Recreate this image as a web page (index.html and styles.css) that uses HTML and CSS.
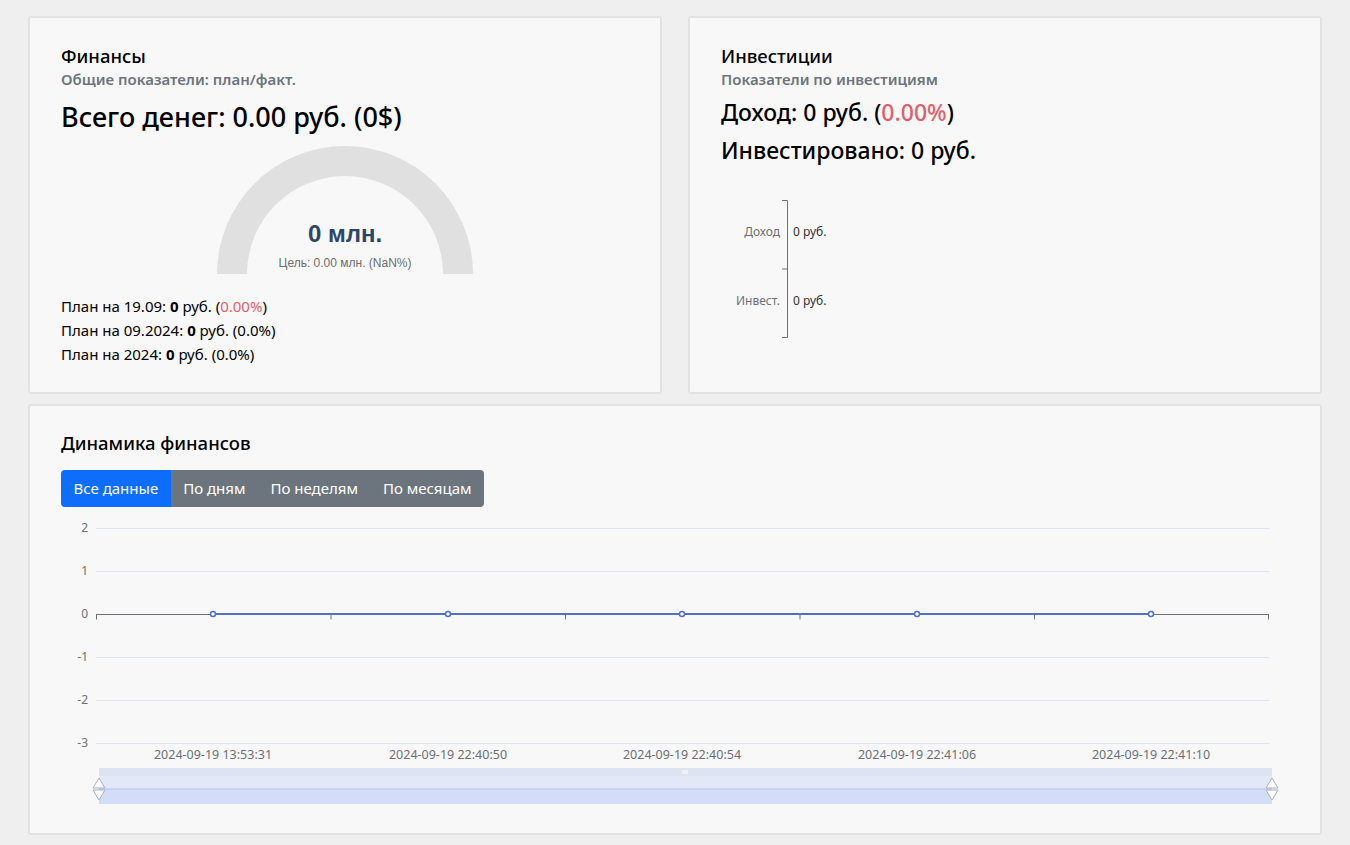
FILE: index.html
```html
<!DOCTYPE html>
<html lang="ru">
<head>
    <meta charset="UTF-8">
    <title>Финансы</title>
    <link rel="stylesheet" href="styles.css">
</head>
<body>
<div class="page">
    <div class="row">
        <div class="card">
            <h5 class="card-title">Финансы</h5>
            <h6 class="card-subtitle">Общие показатели: план/факт.</h6>
            <h4 class="total">Всего денег: 0.00 руб. (0$)</h4>
            <div class="gauge">
                <svg width="256" height="128" viewBox="0 0 256 128">
                    <path d="M0 128 A128 128 0 0 1 256 128 L226 128 A98 98 0 0 0 30 128 Z" fill="#e0e0e0"/>
                    <text x="128" y="96" text-anchor="middle" class="gauge-value">0 млн.</text>
                    <text x="128" y="121" text-anchor="middle" class="gauge-goal">Цель: 0.00 млн. (NaN%)</text>
                </svg>
            </div>
            <ul class="plan">
                <li>План на 19.09: <b>0</b> руб. (<span class="red">0.00%</span>)</li>
                <li>План на 09.2024: <b>0</b> руб. (0.0%)</li>
                <li>План на 2024: <b>0</b> руб. (0.0%)</li>
            </ul>
        </div>

        <div class="card">
            <h5 class="card-title">Инвестиции</h5>
            <h6 class="card-subtitle">Показатели по инвестициям</h6>
            <h4 class="invest">Доход: 0 руб. (<span class="red">0.00%</span>)</h4>
            <h4 class="invest">Инвестировано: 0 руб.</h4>
            <div class="bars">
                <svg width="200" height="150" viewBox="0 0 200 150">
                    <path d="M61 1.5 H66.5 V138.5 H61 M61 70 H66.5" fill="none" stroke="#6e7079" stroke-width="1"/>
                    <text x="59" y="37" text-anchor="end" class="axis-label">Доход</text>
                    <text x="72" y="37" class="bar-value">0 руб.</text>
                    <text x="59" y="106" text-anchor="end" class="axis-label">Инвест.</text>
                    <text x="72" y="106" class="bar-value">0 руб.</text>
                </svg>
            </div>
        </div>
    </div>

    <div class="card wide">
        <h5 class="card-title">Динамика финансов</h5>
        <div class="btn-group">
            <span class="btn active">Все данные</span>
            <span class="btn">По дням</span>
            <span class="btn">По неделям</span>
            <span class="btn">По месяцам</span>
        </div>
        <div class="chart">
            <svg width="1228" height="300" viewBox="0 0 1228 300">
                <g stroke="#e0e6f1" stroke-width="1">
                    <line x1="35" y1="13.5" x2="1208" y2="13.5"/>
                    <line x1="35" y1="56.5" x2="1208" y2="56.5"/>
                    <line x1="35" y1="142.5" x2="1208" y2="142.5"/>
                    <line x1="35" y1="185.5" x2="1208" y2="185.5"/>
                    <line x1="35" y1="228.5" x2="1208" y2="228.5"/>
                </g>
                <g class="axis-label" text-anchor="end">
                    <text x="27" y="17">2</text>
                    <text x="27" y="60">1</text>
                    <text x="27" y="103">0</text>
                    <text x="27" y="146">-1</text>
                    <text x="27" y="189">-2</text>
                    <text x="27" y="232">-3</text>
                </g>
                <g stroke="#6e7079" stroke-width="1" fill="none">
                    <line x1="35" y1="99.5" x2="1208" y2="99.5"/>
                    <path d="M35.5 99.5 V104.5 M270 99.5 V104.5 M504.5 99.5 V104.5 M739 99.5 V104.5 M973.5 99.5 V104.5 M1207.5 99.5 V104.5"/>
                </g>
                <line x1="152" y1="99" x2="1090" y2="99" stroke="#5470c6" stroke-width="2"/>
                <g fill="#fff" stroke="#5470c6" stroke-width="1.5">
                    <circle cx="152" cy="99" r="2.5"/>
                    <circle cx="387" cy="99" r="2.5"/>
                    <circle cx="621" cy="99" r="2.5"/>
                    <circle cx="856" cy="99" r="2.5"/>
                    <circle cx="1090" cy="99" r="2.5"/>
                </g>
                <g class="axis-label date" text-anchor="middle">
                    <text x="152" y="244">2024-09-19 13:53:31</text>
                    <text x="387" y="244">2024-09-19 22:40:50</text>
                    <text x="621" y="244">2024-09-19 22:40:54</text>
                    <text x="856" y="244">2024-09-19 22:41:06</text>
                    <text x="1090" y="244">2024-09-19 22:41:10</text>
                </g>
                <rect x="38" y="253" width="1173" height="8" fill="#dde3f1"/>
                <rect x="38" y="261" width="1173" height="13" fill="#e2e8f7"/>
                <rect x="38" y="274" width="1173" height="15" fill="#d3ddf8"/>
                <line x1="38" y1="274" x2="1211" y2="274" stroke="#b6c6ec" stroke-width="1"/>
                <path d="M622 255 V259 M624 255 V259 M626 255 V259" stroke="#fff" stroke-width="1"/>
                <g fill="#fff" stroke="#a8b1c2" stroke-width="1">
                    <path d="M38 263 L44 273 H32 Z"/>
                    <path d="M38 285 L44 275 H32 Z"/>
                    <path d="M1211 263 L1217 273 H1205 Z"/>
                    <path d="M1211 285 L1217 275 H1205 Z"/>
                </g>
            </svg>
        </div>
    </div>
</div>
</body>
</html>
```

FILE: styles.css
```css
* {
    margin: 0;
    padding: 0;
    box-sizing: border-box;
}

body {
    background-color: #efefef;
    font-family: "Noto Sans", "Liberation Sans", sans-serif;
    color: #000;
}

ul {
    list-style: none;
}

.page {
    padding: 16px 28px 0;
    display: flex;
    flex-direction: column;
    gap: 10px;
}

.row {
    display: grid;
    grid-template-columns: 1fr 1fr;
    gap: 26px;
}

.card {
    background-color: #f8f8f8;
    border: 2px solid #e2e2e2;
    border-radius: 3px;
    padding: 27px 31px 0;
}

.card.wide {
    padding-top: 26px;
}

.row .card {
    height: 378px;
}

.card-title {
    font-size: 18.5px;
    font-weight: 500;
    line-height: 1.2;
}

.card-subtitle {
    font-size: 15px;
    font-weight: 600;
    color: #6c757d;
    line-height: 1.2;
    margin-top: 3px;
}

.total {
    font-size: 27px;
    font-weight: 500;
    line-height: 1.2;
    margin-top: 13px;
}

.red {
    color: #e35d6a;
}

.gauge {
    display: flex;
    justify-content: center;
    margin-top: 12px;
}

.gauge svg {
    display: block;
}

.gauge-value {
    font-family: "Liberation Sans", sans-serif;
    font-size: 24px;
    font-weight: bold;
    fill: #2c4766;
}

.gauge-goal {
    font-family: "Liberation Sans", sans-serif;
    font-size: 12px;
    fill: #6e6e6e;
}

.plan {
    margin-top: 20px;
    font-size: 15px;
    line-height: 24px;
}

.invest {
    font-size: 23px;
    font-weight: 500;
    line-height: 28px;
    margin-top: 10px;
}

.invest + .invest {
    margin-top: 10px;
}

.bars {
    margin-top: 35px;
}

.bars svg {
    display: block;
}

.axis-label {
    font-size: 12px;
    fill: #6e7079;
}

.date {
    font-size: 12.5px;
}

.bar-value {
    font-size: 12px;
    fill: #333;
}

.btn-group {
    display: inline-flex;
    margin-top: 16px;
    border-radius: 4px;
    overflow: hidden;
}

.btn {
    display: inline-block;
    padding: 0 12.5px;
    height: 37px;
    line-height: 37px;
    font-size: 15px;
    color: #fff;
    background-color: #6c757d;
    cursor: pointer;
}

.btn.active {
    background-color: #0d6efd;
}

.chart {
    margin-top: 8px;
    height: 318px;
}

.chart svg {
    display: block;
}
```
